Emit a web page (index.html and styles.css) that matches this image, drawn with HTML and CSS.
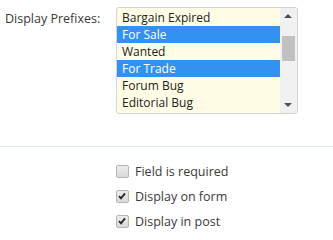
FILE: index.html
```html
<!DOCTYPE html>
<html>
<head>
<meta charset="utf-8">
<link rel="stylesheet" href="styles.css">
</head>
<body>
<div class="form-row">
  <div class="label">Display Prefixes:</div>
  <div class="listbox">
    <div class="options">
      <div class="opt">Bargain Expired</div>
      <div class="opt sel">For Sale</div>
      <div class="opt">Wanted</div>
      <div class="opt sel">For Trade</div>
      <div class="opt">Forum Bug</div>
      <div class="opt">Editorial Bug</div>
    </div>
    <div class="scrollbar">
      <div class="arrow up"></div>
      <div class="track"><div class="thumb"></div></div>
      <div class="arrow down"></div>
    </div>
  </div>
</div>
<div class="sep"></div>
<div class="checks">
  <div class="check"><span class="box"></span>Field is required</div>
  <div class="check"><span class="box on"><svg viewBox="0 0 12 12" width="12" height="12"><path d="M3 6.2 L5 8.4 L9 3.4" fill="none" stroke="#2b2b2b" stroke-width="1.9"/></svg></span>Display on form</div>
  <div class="check"><span class="box on"><svg viewBox="0 0 12 12" width="12" height="12"><path d="M3 6.2 L5 8.4 L9 3.4" fill="none" stroke="#2b2b2b" stroke-width="1.9"/></svg></span>Display in post</div>
</div>
</body>
</html>
```

FILE: styles.css
```css
html, body {
  margin: 0;
  padding: 0;
  background: #fff;
}
body {
  font-family: "Open Sans", "Noto Sans", sans-serif;
  font-size: 12px;
  color: #222;
  width: 333px;
  height: 232px;
  overflow: hidden;
}
.form-row {
  display: flex;
  padding-top: 7px;
}
.label {
  width: 116px;
  box-sizing: border-box;
  padding-left: 5px;
  padding-top: 3px;
  font-size: 12.5px;
  color: #3a3a3a;
}
.listbox {
  width: 182px;
  height: 107px;
  box-sizing: border-box;
  border: 1px solid #d4d4d4;
  border-radius: 3px;
  background: #fffde6;
  display: flex;
  overflow: hidden;
}
.options {
  flex: 1;
  padding-top: 1px;
}
.opt {
  height: 17px;
  line-height: 17px;
  padding-left: 5px;
  color: #222;
  white-space: nowrap;
}
.opt.sel {
  background: #3392f0;
  color: #fff;
}
.scrollbar {
  width: 17px;
  background: #f1f1f1;
  display: flex;
  flex-direction: column;
  align-items: center;
}
.arrow {
  height: 17px;
  width: 17px;
  position: relative;
}
.arrow.up::after, .arrow.down::after {
  content: "";
  position: absolute;
  left: 4px;
  border-left: 4px solid transparent;
  border-right: 4px solid transparent;
}
.arrow.up::after {
  top: 6px;
  border-bottom: 4px solid #505050;
}
.arrow.down::after {
  top: 7px;
  border-top: 4px solid #505050;
}
.track {
  flex: 1;
  width: 17px;
  display: flex;
  justify-content: center;
}
.thumb {
  margin-top: 11px;
  width: 13px;
  height: 25px;
  background: #c1c1c1;
}
.sep {
  margin-top: 32px;
  height: 1px;
  background: #dde8ee;
}
.checks {
  padding-left: 116px;
  padding-top: 12px;
}
.check {
  display: flex;
  align-items: center;
  height: 25px;
  font-size: 12.5px;
  color: #3a3a3a;
}
.box {
  width: 11px;
  height: 11px;
  border: 1px solid #b5b5b5;
  border-radius: 2px;
  background: linear-gradient(#ececec, #d9d9d9);
  margin-right: 6px;
  position: relative;
  box-sizing: content-box;
}
.box svg {
  position: absolute;
  left: -1px;
  top: -1px;
}
```
